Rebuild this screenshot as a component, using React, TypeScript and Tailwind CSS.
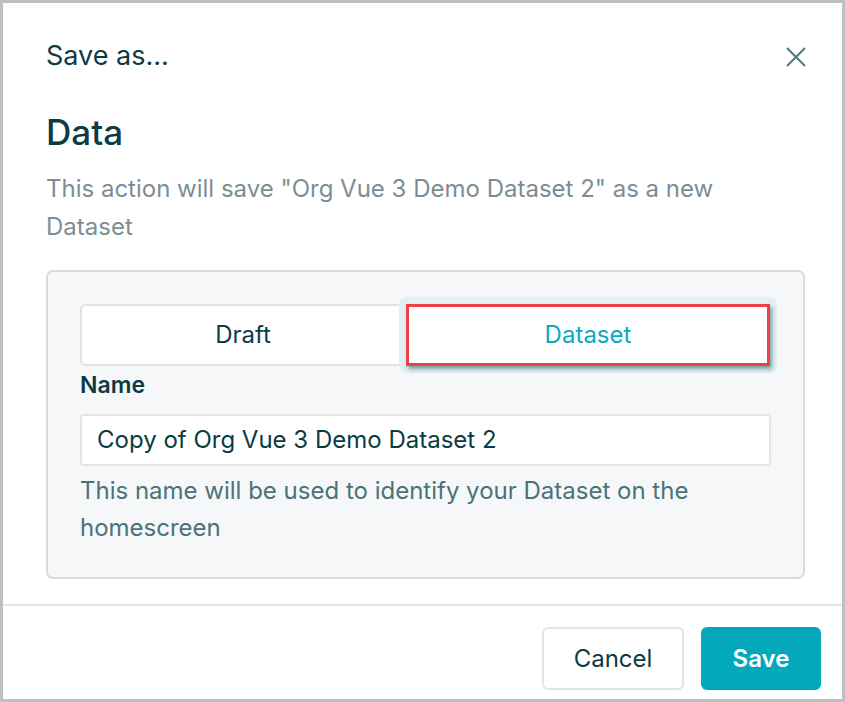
import React from "react";

export default function App() {
  return (
    <div
      className="box-border w-[845px] h-[702px] border-[3px] border-[#c0c0c0] bg-white flex flex-col"
      style={{ fontFamily: "Inter, 'Noto Sans', sans-serif" }}
    >
      <div className="flex items-start justify-between pl-[43px] pr-[35px] pt-[35px]">
        <div className="text-[27px] leading-[36px] text-[#0b3b44]">Save as...</div>
        <svg width="22" height="22" viewBox="0 0 22 22" className="mt-[8px]">
          <path d="M2 2 L20 20 M20 2 L2 20" stroke="#4d7a7f" strokeWidth="2" fill="none" />
        </svg>
      </div>
      <div className="pl-[43px] pr-[37px] pt-[36px] flex flex-col">
        <div className="text-[35px] leading-[44px] font-medium text-[#0b3b44]">Data</div>
        <div className="mt-[16px] text-[24px] leading-[38px] text-[#7c8d95]">
          This action will save "Org Vue 3 Demo Dataset 2" as a new Dataset
        </div>
        <div className="mt-[24px] rounded-[7px] border-2 border-[#d5dde1] bg-[#f5f7f9] px-[32px] pt-[32px] pb-[31px] flex flex-col">
          <div className="flex h-[62px] w-[690px]">
            <div className="w-[326px] flex items-center justify-center bg-white border-2 border-[#dee4e7] rounded-l-[6px] text-[24px] text-[#0b3b44]">
              Draft
            </div>
            <div className="relative w-[364px] flex">
              <div className="absolute -inset-[7px] rounded-[8px] bg-[#e2f0f3]" />
              <div className="relative flex-1 flex items-center justify-center bg-white border-[3px] border-[#ef3f47] shadow-[2px_3px_4px_rgba(0,60,70,0.45)] text-[24px] text-[#0aabbc]">
                Dataset
              </div>
            </div>
          </div>
          <div className="mt-[5px] text-[23px] leading-[28px] font-semibold text-[#0b3b44]">Name</div>
          <div className="mt-[15px] h-[52px] w-[691px] box-border flex items-center bg-white border-2 border-[#e0e6e9] rounded-[4px] pl-[15px] text-[24px] text-[#0b3b44]">
            Copy of Org Vue 3 Demo Dataset 2
          </div>
          <div className="mt-[6px] text-[24px] leading-[37px] text-[#4a7378] w-[660px]">
            This name will be used to identify your Dataset on the homescreen
          </div>
        </div>
      </div>
      <div className="mt-[25px] h-[2px] bg-[#e1e6e9]" />
      <div className="flex justify-end gap-[17px] pr-[21px] pt-[21px]">
        <button className="h-[63px] w-[142px] rounded-[6px] border-2 border-[#e0e5e8] bg-white text-[24px] text-[#0b3b44]">
          Cancel
        </button>
        <button className="h-[63px] w-[120px] rounded-[6px] bg-[#03a9ba] text-[24px] font-semibold text-white">
          Save
        </button>
      </div>
    </div>
  );
}
